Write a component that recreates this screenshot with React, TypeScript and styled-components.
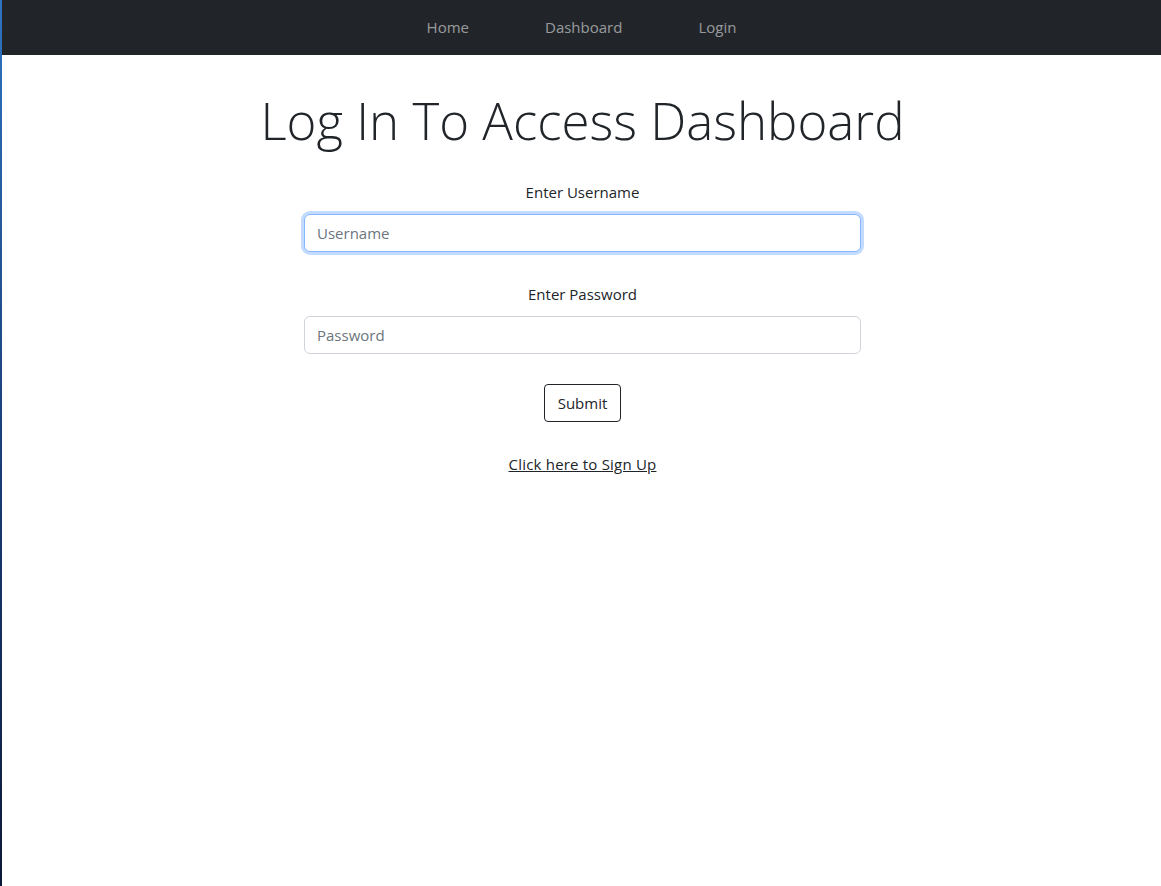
import React from "react";
import styled, { createGlobalStyle, css } from "styled-components";

const GlobalStyle = createGlobalStyle`
  html, body { margin: 0; padding: 0; background: #fff; }
  body {
    font-family: "Segoe UI", "Open Sans", "Noto Sans", "Liberation Sans", sans-serif;
    color: #212529;
    font-size: 16px;
  }
  * { box-sizing: border-box; }
`;

const Frame = styled.div`
  min-height: 886px;
  border-left: 2px solid;
  border-image: linear-gradient(to bottom, #2f74c0, #1a3f78 50%, #0c1838) 1;
  display: flex;
  flex-direction: column;
`;

const NavBar = styled.nav`
  height: 55px;
  background: #212529;
  display: flex;
  justify-content: center;
  align-items: center;
  padding-bottom: 2px;
`;

const NavLink = styled.a`
  color: rgba(255, 255, 255, 0.55);
  text-decoration: none;
  font-size: 15px;
  padding: 0 38px;
  line-height: 24px;
`;

const Main = styled.main`
  display: flex;
  flex-direction: column;
  align-items: center;
  padding-top: 29px;
  padding-left: 2px;
`;

const Title = styled.h1`
  margin: 0;
  font-weight: 300;
  font-size: 51px;
  line-height: 72px;
  letter-spacing: 0;
  color: #212529;
`;

const Form = styled.form`
  width: 557px;
  display: flex;
  flex-direction: column;
  align-items: center;
  margin-top: 24px;
`;

const Field = styled.div`
  width: 100%;
  display: flex;
  flex-direction: column;
  align-items: center;
  margin-bottom: 30px;
`;

const Label = styled.label`
  font-size: 15px;
  line-height: 24px;
  margin-bottom: 10px;
`;

const Input = styled.input<{ $focused?: boolean }>`
  width: 100%;
  height: 38px;
  padding: 6px 12px;
  font-family: inherit;
  font-size: 15px;
  color: #212529;
  border: 1px solid #ced4da;
  border-radius: 6px;
  outline: none;
  background: #fff;
  &::placeholder { color: #6c757d; }
  ${(p) =>
    p.$focused &&
    css`
      border-color: #86b7fe;
      box-shadow: 0 0 0 3px rgba(13, 110, 253, 0.25);
    `}
`;

const SubmitButton = styled.button`
  height: 38px;
  padding: 0 13px;
  font-family: inherit;
  font-size: 15px;
  color: #212529;
  background: #fff;
  border: 1px solid #212529;
  border-radius: 4px;
`;

const SignUp = styled.a`
  margin-top: 30px;
  font-size: 15px;
  letter-spacing: 0.2px;
  color: #212529;
  text-decoration: underline;
  line-height: 24px;
`;

export default function App() {
  return (
    <>
      <GlobalStyle />
      <Frame>
        <NavBar>
          <NavLink href="#">Home</NavLink>
          <NavLink href="#">Dashboard</NavLink>
          <NavLink href="#">Login</NavLink>
        </NavBar>
        <Main>
          <Title>Log In To Access Dashboard</Title>
          <Form onSubmit={(e) => e.preventDefault()}>
            <Field>
              <Label htmlFor="u">Enter Username</Label>
              <Input id="u" placeholder="Username" $focused />
            </Field>
            <Field>
              <Label htmlFor="p">Enter Password</Label>
              <Input id="p" type="password" placeholder="Password" />
            </Field>
            <SubmitButton type="submit">Submit</SubmitButton>
            <SignUp href="#">Click here to Sign Up</SignUp>
          </Form>
        </Main>
      </Frame>
    </>
  );
}
